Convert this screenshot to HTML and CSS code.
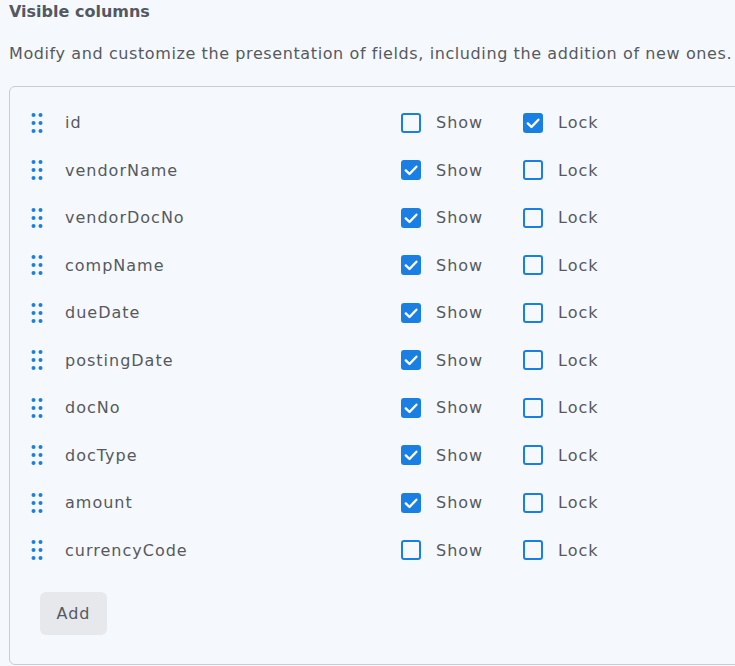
FILE: index.html
```html
<!DOCTYPE html>
<html>
<head>
<meta charset="utf-8">
<link rel="stylesheet" href="styles.css">
</head>
<body>
<div class="page">
  <h2 class="title">Visible columns</h2>
  <p class="desc">Modify and customize the presentation of fields, including the addition of new ones.</p>
  <div class="panel">
    <ul class="rows" id="rows"></ul>
    <button class="add">Add</button>
  </div>
</div>
<script src="app.js"></script>
</body>
</html>
```
FILE: app.js
```js
const data = [
  ["id", false, true],
  ["vendorName", true, false],
  ["vendorDocNo", true, false],
  ["compName", true, false],
  ["dueDate", true, false],
  ["postingDate", true, false],
  ["docNo", true, false],
  ["docType", true, false],
  ["amount", true, false],
  ["currencyCode", false, false]
];
const check = '<svg viewBox="0 0 20 20" width="20" height="20"><path d="M4.8 10.4 L8.5 14 L15.4 6.7" fill="none" stroke="#fff" stroke-width="2.4" stroke-linecap="round" stroke-linejoin="round"/></svg>';
const grip = '<svg viewBox="0 0 12 20" width="12" height="20"><g fill="#1a7fe3"><circle cx="2.5" cy="2" r="2"/><circle cx="9.5" cy="2" r="2"/><circle cx="2.5" cy="10" r="2"/><circle cx="9.5" cy="10" r="2"/><circle cx="2.5" cy="18" r="2"/><circle cx="9.5" cy="18" r="2"/></g></svg>';
const box = (on) => '<span class="box' + (on ? ' on' : '') + '">' + (on ? check : '') + '</span>';
document.getElementById('rows').innerHTML = data.map(([n, s, l]) =>
  '<li class="row"><span class="grip">' + grip + '</span><span class="name">' + n +
  '</span><label class="opt show">' + box(s) + '<span class="lbl">Show</span></label>' +
  '<label class="opt">' + box(l) + '<span class="lbl">Lock</span></label></li>'
).join('');
```
FILE: styles.css
```css
html, body { margin: 0; padding: 0; background: #f5f8fc; overflow: hidden; }
body { font-family: "DejaVu Sans", "Liberation Sans", sans-serif; color: #555a60; }
.page { padding: 0 0 0 9px; width: 800px; }
.title { margin: 0; padding-top: 2px; font-size: 16px; font-weight: 700; color: #545860; line-height: 20px; }
.desc { margin: 21px 0 0; font-size: 16px; letter-spacing: 0.6px; line-height: 22px; color: #555a60; white-space: nowrap; }
.panel { margin-top: 21px; border: 1px solid #c9ccd0; border-radius: 6px; height: 579px; box-sizing: border-box; padding: 12px 0 0 30px; }
.rows { list-style: none; margin: 0; padding: 0; }
.row { display: flex; align-items: center; height: 47.5px; }
.grip { width: 12px; height: 20px; display: flex; margin-left: -9px; }
.name { margin-left: 22px; width: 336px; font-size: 16px; letter-spacing: 1px; }
.opt { display: flex; align-items: center; font-size: 16px; letter-spacing: 1px; }
.opt.show { width: 122px; }
.lbl { margin-left: 15px; }
.box { position: relative; flex: none; width: 20px; height: 20px; box-sizing: border-box; border: 2px solid #1a7fe3; border-radius: 3px; }
.box svg { position: absolute; left: -2px; top: -2px; }
.box.on { background: #1a7fe3; }
.add { margin: 18px 0 0 0; width: 67px; height: 43px; border: none; border-radius: 6px; background: #e6e8eb; font-family: inherit; font-size: 16px; letter-spacing: 1px; color: #555a60; }
```
